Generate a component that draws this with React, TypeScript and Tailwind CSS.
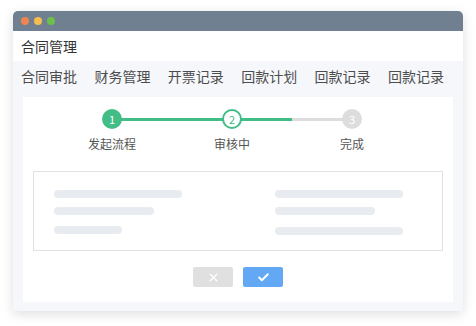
import { Check, X } from "lucide-react";

const tabs = ["合同审批", "财务管理", "开票记录", "回款计划", "回款记录", "回款记录"];

const steps = [
  { n: "1", label: "发起流程", state: "done" },
  { n: "2", label: "审核中", state: "active" },
  { n: "3", label: "完成", state: "todo" },
];

const App = () => {
  return (
    <div
      className="w-[476px] h-[326px] bg-white pt-[11px] pl-[13px]"
      style={{ fontFamily: '"Noto Sans CJK SC", "Noto Sans", sans-serif' }}
    >
      <div className="w-[450px] h-[300px] flex flex-col rounded-t-[5px] bg-[#f6f7fb] shadow-[0_3px_12px_rgba(0,0,0,0.13)]">
        {/* title bar */}
        <div className="h-[20px] flex items-center gap-[5px] pl-[8px] rounded-t-[5px] bg-[#718090]">
          <span className="w-[8px] h-[8px] rounded-full bg-[#f0844f]" />
          <span className="w-[8px] h-[8px] rounded-full bg-[#f5bd4f]" />
          <span className="w-[8px] h-[8px] rounded-full bg-[#6cc04a]" />
        </div>

        <div className="h-[30px] flex items-center pl-[8px] bg-white text-[14px] text-[#333]">
          合同管理
        </div>

        <div className="h-[30px] flex items-center gap-[17.4px] pl-[8px] text-[14px] text-[#4d4d4d]">
          {tabs.map((t, i) => (
            <span key={i} className="whitespace-nowrap">{t}</span>
          ))}
        </div>

        <div className="px-[10px] pt-[6px]">
          <div className="h-[205px] bg-white flex flex-col pt-[12px]">
            {/* steps */}
            <div className="relative ml-[29px] w-[360px] flex">
              <div className="absolute left-[60px] top-[9px] w-[120px] h-[3px] bg-[#42bd86]" />
              <div className="absolute left-[180px] top-[9px] w-[60px] h-[3px] bg-[#42bd86]" />
              <div className="absolute left-[240px] top-[9px] w-[60px] h-[3px] bg-[#dddddd]" />
              {steps.map((s) => (
                <div key={s.n} className="relative w-[120px] flex flex-col items-center">
                  <div
                    className={
                      s.state === "done"
                        ? "w-[20px] h-[20px] rounded-full bg-[#42bd86] text-white text-[11px] flex items-center justify-center"
                        : s.state === "active"
                        ? "w-[20px] h-[20px] rounded-full bg-white border-2 border-[#42bd86] text-[#42bd86] text-[11px] flex items-center justify-center"
                        : "w-[20px] h-[20px] rounded-full bg-[#dddddd] text-white text-[11px] flex items-center justify-center"
                    }
                  >
                    {s.n}
                  </div>
                  <div className="mt-[6px] text-[12px] leading-[17px] text-[#555]">{s.label}</div>
                </div>
              ))}
            </div>

            {/* content box */}
            <div className="mx-[10px] mt-[19px] h-[80px] border border-[#dfe3e8] flex pt-[18px]">
              <div className="w-[241px] pl-[20px] flex flex-col gap-[9px]">
                <div className="w-[128px] h-[8px] rounded-full bg-[#e8ebef]" />
                <div className="w-[100px] h-[8px] rounded-full bg-[#e8ebef]" />
                <div className="w-[68px] h-[8px] rounded-full bg-[#e8ebef] mt-[2px]" />
              </div>
              <div className="flex flex-col gap-[9px]">
                <div className="w-[128px] h-[8px] rounded-full bg-[#e8ebef]" />
                <div className="w-[100px] h-[8px] rounded-full bg-[#e8ebef]" />
                <div className="w-[128px] h-[8px] rounded-full bg-[#e8ebef] mt-[3px]" />
              </div>
            </div>

            {/* buttons */}
            <div className="mt-[16px] flex justify-center gap-[10px]">
              <div className="w-[40px] h-[20px] rounded-[2px] bg-[#e0e0e0] flex items-center justify-center">
                <X size={13} strokeWidth={2.5} color="#ffffff" />
              </div>
              <div className="w-[40px] h-[20px] rounded-[2px] bg-[#62a8f5] flex items-center justify-center">
                <Check size={13} strokeWidth={3.5} color="#ffffff" />
              </div>
            </div>
          </div>
        </div>
      </div>
    </div>
  );
};

export default App;
